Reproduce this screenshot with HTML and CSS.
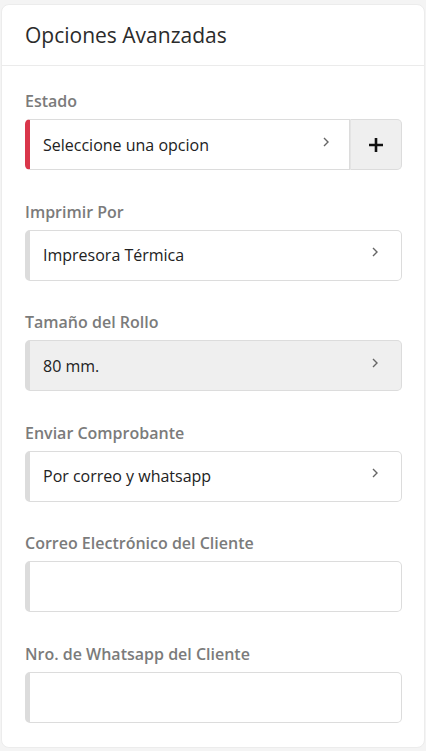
FILE: index.html
```html
<!DOCTYPE html>
<html lang="es">
<head>
    <meta charset="UTF-8">
    <meta name="viewport" content="width=device-width, initial-scale=1.0">
    <title>Opciones Avanzadas</title>
    <link rel="stylesheet" href="styles.css">
</head>
<body>

<div class="card">
    <div class="card-header">
        <h2>Opciones Avanzadas</h2>
    </div>
    <div class="card-body">
        <div class="field">
            <label>Estado</label>
            <div class="select-group">
                <div class="select required">
                    <span>Seleccione una opcion</span>
                    <svg class="chevron" viewBox="0 0 8 12"><path d="M2 2l4 4-4 4"/></svg>
                </div>
                <button class="add-btn" type="button">
                    <svg viewBox="0 0 16 16"><path d="M8 1v14M1 8h14"/></svg>
                </button>
            </div>
        </div>

        <div class="field">
            <label>Imprimir Por</label>
            <div class="select">
                <span>Impresora Térmica</span>
                <svg class="chevron" viewBox="0 0 8 12"><path d="M2 2l4 4-4 4"/></svg>
            </div>
        </div>

        <div class="field">
            <label>Tamaño del Rollo</label>
            <div class="select disabled">
                <span>80 mm.</span>
                <svg class="chevron" viewBox="0 0 8 12"><path d="M2 2l4 4-4 4"/></svg>
            </div>
        </div>

        <div class="field">
            <label>Enviar Comprobante</label>
            <div class="select">
                <span>Por correo y whatsapp</span>
                <svg class="chevron" viewBox="0 0 8 12"><path d="M2 2l4 4-4 4"/></svg>
            </div>
        </div>

        <div class="field">
            <label>Correo Electrónico del Cliente</label>
            <input type="text" class="text-input">
        </div>

        <div class="field">
            <label>Nro. de Whatsapp del Cliente</label>
            <input type="text" class="text-input">
        </div>
    </div>
</div>

</body>
</html>
```

FILE: styles.css
```css
body {
    font-family: "Open Sans", Arial, sans-serif;
    background: #f4f4f4;
    color: #222;
    margin: 0;
    padding: 4px 1px 0;
    height: 747px;
    overflow: hidden;
}

.card {
    background: #fff;
    border: 1px solid #ececec;
    border-radius: 8px;
    height: 744px;
    box-sizing: border-box;
}

.card-header {
    height: 61px;
    padding: 0 23px;
    display: flex;
    align-items: center;
    border-bottom: 1px solid #ebebeb;
    box-sizing: border-box;
}

.card-header h2 {
    margin: 0;
    font-size: 21px;
    font-weight: 500;
    color: #2b2b2b;
}

.card-body {
    padding: 23px 22px 0 23px;
}

.field {
    margin-bottom: 29.5px;
}

.field label {
    display: block;
    font-size: 16px;
    font-weight: 600;
    color: #7b7b7b;
    line-height: 24px;
    margin-bottom: 6px;
}

.select-group {
    display: flex;
}

.select, .text-input {
    display: flex;
    align-items: center;
    justify-content: space-between;
    height: 51px;
    box-sizing: border-box;
    border: 1px solid #dcdcdc;
    border-left: 5px solid #dcdcdc;
    border-radius: 5px;
    padding: 0 22px 0 13px;
    font-size: 16px;
    color: #222;
    background: #fff;
}

.text-input {
    width: 100%;
    font-family: inherit;
    outline: none;
}

.select.required {
    flex: 1;
    border-left-color: #d9364a;
    border-radius: 5px 0 0 5px;
    padding-right: 19px;
}

.select.disabled {
    background: #efefef;
}

.chevron {
    width: 8px;
    height: 12px;
    margin-top: -6px;
    fill: none;
    stroke: #666;
    stroke-width: 1.4;
}

.add-btn {
    width: 52px;
    height: 51px;
    background: #efefef;
    border: 1px solid #dcdcdc;
    border-left: 1px solid #e4e4e4;
    border-radius: 0 5px 5px 0;
    display: flex;
    align-items: center;
    justify-content: center;
    padding: 0;
    cursor: pointer;
}

.add-btn svg {
    width: 16px;
    height: 16px;
    fill: none;
    stroke: #111;
    stroke-width: 2.6;
}
```
